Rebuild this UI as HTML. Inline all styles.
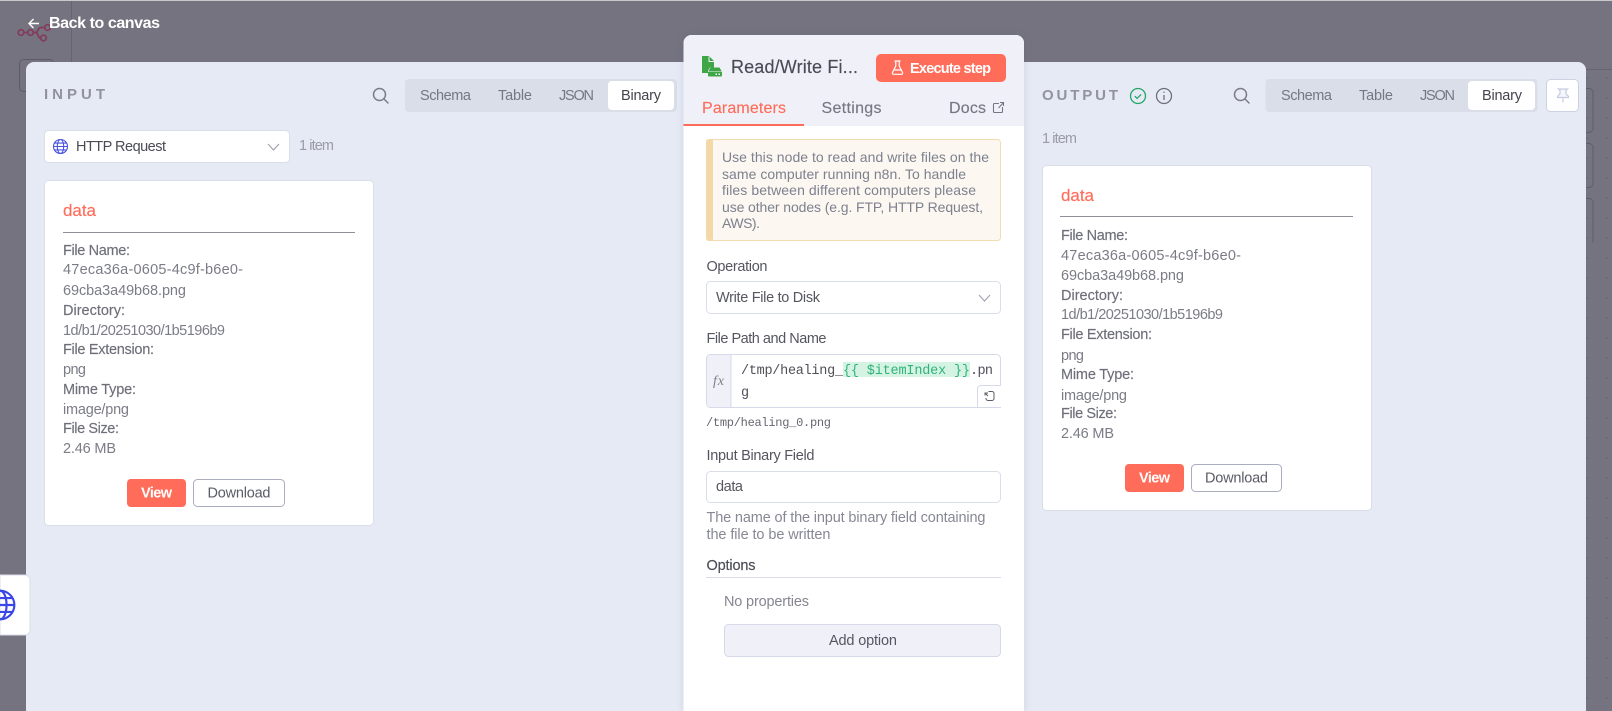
<!DOCTYPE html>
<html lang="en">
<head>
<meta charset="utf-8">
<title>Read/Write Files from Disk</title>
<style>
html,body{margin:0;padding:0;width:1612px;height:711px;overflow:hidden;background:#75737f}
svg{display:block;position:absolute;left:0;top:0}
text{font-family:"Liberation Sans",sans-serif;font-size:14.5px;white-space:pre}
.m{stroke:currentColor;stroke-width:.15}
.hd{font-size:15px;font-weight:700;fill:#92939f}
.lab{fill:#6e6f7a;color:#6e6f7a}
.val{fill:#7b7c86}
.tab{fill:#767784;color:#767784}
.mono{font-family:"Liberation Mono",monospace;font-size:13.5px;fill:#4f5058}
.note{font-size:14px;fill:#7d808f}
.form{fill:#55565f;color:#55565f}
</style>
</head>
<body>
<svg width="1612" height="711" viewBox="0 0 1612 711" xmlns="http://www.w3.org/2000/svg">
<defs>
<pattern id="dots" width="20" height="20" patternUnits="userSpaceOnUse"><circle cx="7" cy="18" r=".7" fill="#5f5d68"/></pattern>
<g id="globe" fill="none"><circle r="7"/><ellipse rx="3.2" ry="7"/><path d="M-7 0H7M-6 -3.4H6M-6 3.4H6"/></g>
<g id="search" fill="none" stroke="#7b7c86" stroke-width="1.5"><circle cx="6.5" cy="6.5" r="6"/><path d="M11 11l4 4" stroke-linecap="round"/></g>
<g id="chev"><path d="M0 0l5.5 6L11 0" fill="none" stroke="#a0a2ae" stroke-width="1.1"/></g>
</defs>

<!-- backdrop -->
<rect width="1612" height="711" fill="#75737f"/>
<rect width="1612" height="1" fill="#c9c9cc"/>
<rect x="1586" y="69" width="26" height="642" fill="url(#dots)"/>
<path d="M71.5 1V62" stroke="#66646f"/>
<path d="M1586 69.5H1612" stroke="#66646f"/>
<rect x="19.5" y="59.5" width="34" height="32" rx="4" fill="none" stroke="#5d5c66"/>
<path d="M1570 88.500h19a4 4 0 0 1 4 4v36a4 4 0 0 1-4 4h-19M1570 143.500h19a4 4 0 0 1 4 4v36a4 4 0 0 1-4 4h-19M1570 198.500h19a4 4 0 0 1 4 4v40" fill="none" stroke="#5f5d68"/>
<g fill="none" stroke="#843a5c" stroke-width="1.700">
<circle cx="21" cy="32.500" r="2.800"/><circle cx="30.500" cy="32.500" r="2.800"/><circle cx="43.500" cy="38" r="2.800"/><circle cx="47.500" cy="27.500" r="2.800"/>
<path d="M24 32.500h3.500M33.500 32.500h2c3 0 2-5 5.500-5h3.500M35.500 32.500c3.500 0 1.500 5.500 5 5.500"/>
</g>

<!-- back link -->
<path d="M39 23.500H29M33.500 19l-4.500 4.500 4.500 4.500" fill="none" stroke="#fff" stroke-width="1.400"/>
<text x="49" y="28" font-weight="700" fill="#fff" textLength="111" lengthAdjust="spacing" style="font-size:16px">Back to canvas</text>

<!-- main panel -->
<path d="M26 711V70a8 8 0 0 1 8-8H1578a8 8 0 0 1 8 8V711Z" fill="#e6eaf4"/>

<!-- INPUT -->
<text x="44" y="99" class="hd" textLength="61" lengthAdjust="spacing">INPUT</text>
<use href="#search" x="373" y="88"/>
<rect x="405" y="79" width="272" height="33" rx="4" fill="#d9dee9"/>
<rect x="608" y="81" width="66" height="29" rx="4" fill="#fff"/>
<text x="420" y="100" class="tab" textLength="51" lengthAdjust="spacing">Schema</text>
<text x="498" y="100" class="tab" textLength="34" lengthAdjust="spacing">Table</text>
<text x="559" y="100" class="tab" textLength="35" lengthAdjust="spacing">JSON</text>
<text x="621" y="100" fill="#44454d" textLength="40" lengthAdjust="spacing">Binary</text>

<rect x="44.500" y="130.500" width="245" height="32" rx="4" fill="#fff" stroke="#d9dee9"/>
<use href="#globe" x="60.500" y="146.500" stroke="#4a55e0" stroke-width="1.100"/>
<text x="76" y="151" fill="#4a4b54" textLength="90" lengthAdjust="spacing">HTTP Request</text>
<use href="#chev" x="268" y="144"/>
<text x="299" y="150" fill="#9a9ba6" textLength="35" lengthAdjust="spacing">1 item</text>

<!-- input card -->
<rect x="44.500" y="180.500" width="329" height="345" rx="4" fill="#fff" stroke="#d9dee9"/>
<text x="63" y="216" class="m" style="font-size:17px;fill:#ff6d5a;color:#ff6d5a" textLength="33" lengthAdjust="spacing">data</text>
<rect x="63" y="232" width="292" height="1" fill="#8f909c"/>
<text x="63" y="255" class="lab m" textLength="67" lengthAdjust="spacing">File Name:</text>
<text x="63" y="274" class="val" textLength="180" lengthAdjust="spacing">47eca36a-0605-4c9f-b6e0-</text>
<text x="63" y="295" class="val" textLength="123" lengthAdjust="spacing">69cba3a49b68.png</text>
<text x="63" y="315" class="lab m" textLength="62" lengthAdjust="spacing">Directory:</text>
<text x="63" y="335" class="val" textLength="162" lengthAdjust="spacing">1d/b1/20251030/1b5196b9</text>
<text x="63" y="354" class="lab m" textLength="91" lengthAdjust="spacing">File Extension:</text>
<text x="63" y="374" class="val" textLength="23" lengthAdjust="spacing">png</text>
<text x="63" y="394" class="lab m" textLength="73" lengthAdjust="spacing">Mime Type:</text>
<text x="63" y="414" class="val" textLength="66" lengthAdjust="spacing">image/png</text>
<text x="63" y="433" class="lab m" textLength="56" lengthAdjust="spacing">File Size:</text>
<text x="63" y="453" class="val" textLength="53" lengthAdjust="spacing">2.46 MB</text>
<rect x="127" y="479" width="59" height="28" rx="4" fill="#ff6d5a"/>
<text x="141" y="497.500" font-weight="700" fill="#fff" textLength="31" lengthAdjust="spacing">View</text>
<rect x="193.500" y="479.500" width="91" height="27" rx="4" fill="#fff" stroke="#a9adbf"/>
<text x="207.500" y="497.500" fill="#5b5c65" textLength="63" lengthAdjust="spacing">Download</text>

<!-- floating globe tab -->
<path d="M0 575H25a5 5 0 0 1 5 5v50a5 5 0 0 1-5 5H0Z" fill="#fff" stroke="#d9dee9"/>
<g transform="translate(0 605) scale(2.050)"><use href="#globe" stroke="#3b46e8" stroke-width="1.050"/></g>

<!-- OUTPUT -->
<text x="1042" y="100" class="hd" textLength="76" lengthAdjust="spacing">OUTPUT</text>
<circle cx="1138" cy="96" r="7.500" fill="none" stroke="#22a565" stroke-width="1.300"/>
<path d="M1134.800 96.200l2.300 2.200 4-4" fill="none" stroke="#22a565" stroke-width="1.300"/>
<circle cx="1164" cy="96" r="7.500" fill="none" stroke="#6e6f7a" stroke-width="1.300"/>
<path d="M1164 95v5M1164 91.600v1.300" stroke="#6e6f7a" stroke-width="1.300"/>
<use href="#search" x="1234" y="88"/>
<rect x="1265.500" y="79" width="272" height="33" rx="4" fill="#d9dee9"/>
<rect x="1468" y="81" width="67" height="29" rx="4" fill="#fff"/>
<text x="1281" y="100" class="tab" textLength="51" lengthAdjust="spacing">Schema</text>
<text x="1359" y="100" class="tab" textLength="34" lengthAdjust="spacing">Table</text>
<text x="1420" y="100" class="tab" textLength="35" lengthAdjust="spacing">JSON</text>
<text x="1482" y="100" fill="#44454d" textLength="40" lengthAdjust="spacing">Binary</text>
<rect x="1546.500" y="79.500" width="32" height="32" rx="4" fill="#fff" stroke="#ccd2e2"/>
<path d="M1558.500 89h9l-1.500 1.300v3.500l2.500 2.700v1h-11v-1l2.500-2.700v-3.500ZM1563 98.500v4" fill="#f4f6fb" stroke="#c6cce0" stroke-width="1.200"/>
<text x="1042" y="143" fill="#9a9ba6" textLength="35" lengthAdjust="spacing">1 item</text>

<!-- output card -->
<rect x="1042.500" y="165.500" width="329" height="345" rx="4" fill="#fff" stroke="#d9dee9"/>
<text x="1061" y="201" class="m" style="font-size:17px;fill:#ff6d5a;color:#ff6d5a" textLength="33" lengthAdjust="spacing">data</text>
<rect x="1060" y="216" width="293" height="1" fill="#8f909c"/>
<text x="1061" y="240" class="lab m" textLength="67" lengthAdjust="spacing">File Name:</text>
<text x="1061" y="260" class="val" textLength="180" lengthAdjust="spacing">47eca36a-0605-4c9f-b6e0-</text>
<text x="1061" y="280" class="val" textLength="123" lengthAdjust="spacing">69cba3a49b68.png</text>
<text x="1061" y="300" class="lab m" textLength="62" lengthAdjust="spacing">Directory:</text>
<text x="1061" y="319" class="val" textLength="162" lengthAdjust="spacing">1d/b1/20251030/1b5196b9</text>
<text x="1061" y="339" class="lab m" textLength="91" lengthAdjust="spacing">File Extension:</text>
<text x="1061" y="360" class="val" textLength="23" lengthAdjust="spacing">png</text>
<text x="1061" y="379" class="lab m" textLength="73" lengthAdjust="spacing">Mime Type:</text>
<text x="1061" y="400" class="val" textLength="66" lengthAdjust="spacing">image/png</text>
<text x="1061" y="418" class="lab m" textLength="56" lengthAdjust="spacing">File Size:</text>
<text x="1061" y="438" class="val" textLength="53" lengthAdjust="spacing">2.46 MB</text>
<rect x="1125" y="464" width="59" height="28" rx="4" fill="#ff6d5a"/>
<text x="1139" y="482.500" font-weight="700" fill="#fff" textLength="31" lengthAdjust="spacing">View</text>
<rect x="1191.500" y="464.500" width="90" height="27" rx="4" fill="#fff" stroke="#a9adbf"/>
<text x="1205" y="482.500" fill="#5b5c65" textLength="63" lengthAdjust="spacing">Download</text>

<!-- center panel -->
<path d="M683.500 711V43a8 8 0 0 1 8-8H1016a8 8 0 0 1 8 8V711Z" fill="#fff" style="filter:drop-shadow(0 0 4px rgba(60,70,110,.14))"/>
<path d="M683.500 126V43a8 8 0 0 1 8-8H1016a8 8 0 0 1 8 8V126Z" fill="#f0f1f8"/>

<!-- node icon -->
<path d="M702 56h7l5 5v6.500h-4l-2 3v2.500h-6Z" fill="#3fa648"/>
<path d="M709 56.500v5h5" fill="none" stroke="#f0f1f8" stroke-width="1"/>
<path d="M710.500 67.500h9l2 3.500h-13Z" fill="#3fa648"/>
<rect x="708" y="71.500" width="14" height="5" rx="1" fill="#3fa648"/>
<rect x="715.500" y="73.500" width="1.500" height="1.500" fill="#fff"/><rect x="718.500" y="73.500" width="1.500" height="1.500" fill="#fff"/>
<text x="731" y="73" class="m" style="font-size:18px;fill:#4a4b54;color:#4a4b54" textLength="127" lengthAdjust="spacing">Read/Write Fi...</text>

<!-- execute button -->
<rect x="876" y="54" width="130" height="28" rx="5" fill="#ff6d5a"/>
<path d="M894.500 61h6M895.800 61v5l-3.300 6.500a1.200 1.200 0 0 0 1 1.800h8a1.200 1.200 0 0 0 1-1.800l-3.300-6.500v-5M894 70h8" fill="none" stroke="#fff" stroke-width="1.200"/>
<text x="910" y="73" font-weight="700" fill="#fff" textLength="81" lengthAdjust="spacing">Execute step</text>

<!-- node tabs -->
<text x="702" y="113" class="m" style="font-size:16px;fill:#ff6d5a;color:#ff6d5a" textLength="84" lengthAdjust="spacing">Parameters</text>
<rect x="683.500" y="124" width="120.500" height="2" fill="#ff6d5a"/>
<text x="821.500" y="113" class="tab m" style="font-size:16px" textLength="60" lengthAdjust="spacing">Settings</text>
<text x="949" y="113" class="tab m" style="font-size:16px" textLength="37" lengthAdjust="spacing">Docs</text>
<path d="M999 103.500h-4.500a1 1 0 0 0-1 1v7a1 1 0 0 0 1 1h7a1 1 0 0 0 1-1V107M998.500 108l5-5.500M1000 102.500h3.500v3.500" fill="none" stroke="#767784" stroke-width="1.100"/>

<!-- notice -->
<rect x="706.500" y="139.500" width="294" height="101" rx="3" fill="#fcf8f1" stroke="#f3dcb2"/>
<path d="M709 139h4v102h-4a3 3 0 0 1-3-3v-96a3 3 0 0 1 3-3Z" fill="#f3d8a8"/>
<text x="722" y="162" class="note" textLength="267" lengthAdjust="spacing">Use this node to read and write files on the</text>
<text x="722" y="179" class="note" textLength="244" lengthAdjust="spacing">same computer running n8n. To handle</text>
<text x="722" y="195" class="note" textLength="254" lengthAdjust="spacing">files between different computers please</text>
<text x="722" y="212" class="note" textLength="261" lengthAdjust="spacing">use other nodes (e.g. FTP, HTTP Request,</text>
<text x="722" y="228" class="note" textLength="38" lengthAdjust="spacing">AWS).</text>

<!-- operation -->
<text x="706.500" y="271" class="form" textLength="61" lengthAdjust="spacing">Operation</text>
<rect x="706.500" y="281.500" width="294" height="32" rx="4" fill="#fff" stroke="#d9dee9"/>
<text x="716" y="302" class="form" textLength="104" lengthAdjust="spacing">Write File to Disk</text>
<use href="#chev" x="979" y="295"/>

<!-- file path -->
<text x="706.500" y="343" class="form" textLength="120" lengthAdjust="spacing">File Path and Name</text>
<rect x="706.500" y="354.500" width="294" height="53" rx="4" fill="#fff" stroke="#d5d9e8"/>
<path d="M731 355H711a4 4 0 0 0-4 4v44a4 4 0 0 0 4 4h20Z" fill="#f0f1f8"/>
<path d="M731 355v52" stroke="#d5d9e8"/>
<text x="713" y="385" style="font-family:'Liberation Serif',serif;font-style:italic;font-size:14px;fill:#7b7c86" textLength="11" lengthAdjust="spacing">fx</text>
<rect x="843" y="362" width="127" height="15" fill="#d5f3e3"/>
<text x="741" y="374" class="mono" textLength="102" lengthAdjust="spacing">/tmp/healing_</text>
<text x="843" y="374" class="mono" style="fill:#2fb37a" textLength="127" lengthAdjust="spacing">{{ $itemIndex }}</text>
<text x="970" y="374" class="mono" textLength="23" lengthAdjust="spacing">.pn</text>
<text x="741" y="396" class="mono">g</text>
<path d="M1001 385.500H981a3.500 3.500 0 0 0-3.500 3.500v18.500H1001" fill="#fff" stroke="#d5d9e8"/>
<path d="M985 395.500v-2.500h3M985 393l3 3M988.500 391.500h3.500a2 2 0 0 1 2 2v5a2 2 0 0 1-2 2h-4a2 2 0 0 1-2-2V398" fill="none" stroke="#5b5c65" stroke-width="1"/>
<text x="706" y="426" class="mono" style="font-size:12px;fill:#666770" textLength="125" lengthAdjust="spacing">/tmp/healing_0.png</text>

<!-- binary field -->
<text x="706.500" y="460" class="form" textLength="108" lengthAdjust="spacing">Input Binary Field</text>
<rect x="706.500" y="471.500" width="294" height="31" rx="4" fill="#fff" stroke="#d9dee9"/>
<text x="716" y="491" class="form" textLength="27" lengthAdjust="spacing">data</text>
<text x="706.500" y="522" fill="#878894" textLength="279" lengthAdjust="spacing">The name of the input binary field containing</text>
<text x="706.500" y="539" fill="#878894" textLength="124" lengthAdjust="spacing">the file to be written</text>

<!-- options -->
<text x="706.500" y="570" class="m" style="fill:#4a4b54;color:#4a4b54" textLength="49" lengthAdjust="spacing">Options</text>
<rect x="706" y="577" width="295" height="1" fill="#d9dce8"/>
<text x="724" y="606" fill="#85868f" textLength="85" lengthAdjust="spacing">No properties</text>
<rect x="724.500" y="624.500" width="276" height="32" rx="4" fill="#f0f1f8" stroke="#d5d9e8"/>
<text x="829" y="645" class="form" textLength="68" lengthAdjust="spacing">Add option</text>
</svg>
</body>
</html>
